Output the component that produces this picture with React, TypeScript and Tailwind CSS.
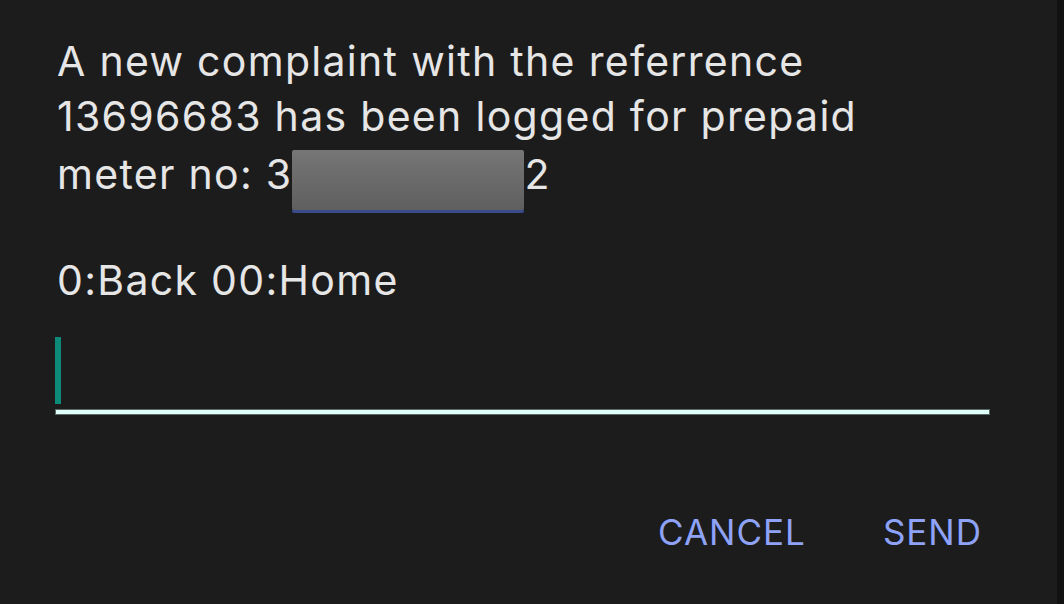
export default function App() {
  const font = { fontFamily: 'Inter, "Noto Sans", sans-serif' };
  return (
    <div className="flex h-[604px] w-[1064px] overflow-hidden bg-[#111111]" style={font}>
      <div className="flex w-[1057px] flex-col bg-[#1c1c1c] pl-[57px] pr-[67px] pt-[34px]">
        <p className="text-[41px] leading-[55px] tracking-[1.3px] text-[#e6e6e6]">
          A new complaint with the referrence
          <br />
          13696683 has been logged for prepaid
          <br />
          <span className="inline-flex items-center">
            meter no: 3
            <span className="relative top-[6px] inline-block h-[60px] w-[232px] rounded-[2px] bg-gradient-to-b from-[#767676] to-[#5f5f5f] shadow-[0_3px_0_#3a4a8a]" />
            2
          </span>
        </p>
        <p className="mt-[49px] text-[41px] leading-[55px] tracking-[1.3px] text-[#e6e6e6]">0:Back 00:Home</p>
        <div className="mt-[29px] ml-[-2px] flex h-[78px] flex-col justify-end">
          <div className="mb-[5px] h-[67px] w-[6px] bg-[#0e8a78]" />
          <div className="h-[6px] w-[935px] border border-[#5a6a68] bg-[#e0fff9]" />
        </div>
        <div className="mt-[97px] flex justify-end gap-[77px] pr-[8px]">
          <span className="text-[35px] leading-[40px] tracking-[1px] text-[#8ea3f7]">CANCEL</span>
          <span className="text-[35px] leading-[40px] tracking-[1px] text-[#8ea3f7]">SEND</span>
        </div>
      </div>
    </div>
  );
}
